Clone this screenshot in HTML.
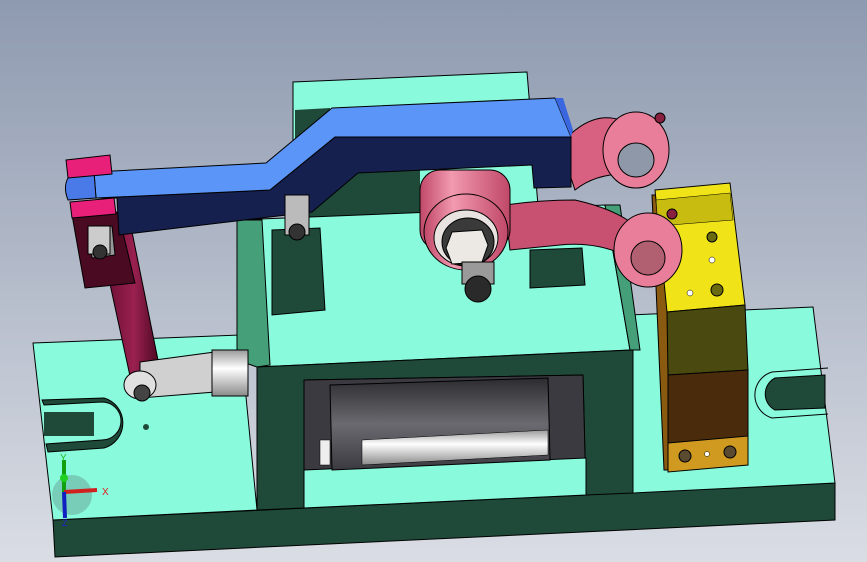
<!DOCTYPE html>
<html><head><meta charset="utf-8"><style>
html,body{margin:0;padding:0;width:867px;height:562px;overflow:hidden;font-family:"Liberation Sans",sans-serif}
</style></head><body>
<svg width="867" height="562" viewBox="0 0 867 562" xmlns="http://www.w3.org/2000/svg">
<defs>
<linearGradient id="bg" x1="0" y1="0" x2="0" y2="1"><stop offset="0" stop-color="#8e9ab0"/><stop offset="1" stop-color="#dadde4"/></linearGradient>
<linearGradient id="rod" x1="0" y1="0" x2="0" y2="1"><stop offset="0" stop-color="#9a9a9a"/><stop offset=".4" stop-color="#ffffff"/><stop offset="1" stop-color="#8a8a8a"/></linearGradient>
<linearGradient id="cyl" x1="0" y1="0" x2="0" y2="1"><stop offset="0" stop-color="#2c2c30"/><stop offset=".5" stop-color="#6a6a70"/><stop offset="1" stop-color="#3a3a40"/></linearGradient>
<linearGradient id="pink" x1="0" y1="0" x2="1" y2="0"><stop offset="0" stop-color="#c04868"/><stop offset=".35" stop-color="#f29ab0"/><stop offset="1" stop-color="#c04868"/></linearGradient>
<linearGradient id="red" x1="0" y1="0" x2="1" y2="0"><stop offset="0" stop-color="#5a0a2a"/><stop offset=".6" stop-color="#9a2050"/><stop offset="1" stop-color="#4a0820"/></linearGradient>
</defs>
<rect width="867" height="562" fill="url(#bg)"/>
<polygon points="53,520 835,483 835,520 55,557" fill="#1f4a3a" stroke="#000" stroke-width="1"/>
<polygon points="33,343 240,335 257,510 53,520" fill="#8afadc" stroke="#000" stroke-width="1"/>
<polygon points="630,315 813,307 835,483 633,493" fill="#8afadc" stroke="#000" stroke-width="1"/>
<path d="M44,405 L102,402 A18,18 0 0 1 102,440 L46,444 L48,452 L104,448 A26,26 0 0 0 104,398 L42,400Z" fill="#1f4a3a" stroke="#000" stroke-width="1"/>
<rect x="44" y="412" width="50" height="24" fill="#1f4a3a"/>
<path d="M825,375 L775,378 A18,18 0 0 0 775,410 L825,408Z" fill="#1f4a3a" stroke="#000" stroke-width="1"/>
<path d="M828,368 L772,372 A24,24 0 0 0 772,418 L828,414" fill="none" stroke="#000" stroke-width="1"/>
<circle cx="146" cy="427" r="3" fill="#1f4a3a"/>
<polygon points="293,82 527,72 540,230 293,235" fill="#8afadc" stroke="#000" stroke-width="1"/>
<polygon points="295,110 330,108 330,230 295,232" fill="#1f4a3a"/>
<polygon points="330,170 420,168 420,215 300,222" fill="#1f4a3a"/>
<polygon points="237,220 605,205 630,350 257,367" fill="#8afadc" stroke="#000" stroke-width="1"/>
<polygon points="237,220 262,220 270,365 257,367 237,360" fill="#45a07a" stroke="#000" stroke-width="1"/>
<polygon points="605,205 620,205 640,350 630,350" fill="#45a07a" stroke="#000" stroke-width="1"/>
<polygon points="272,230 320,228 325,310 272,315" fill="#1f4a3a" stroke="#000" stroke-width="1"/>
<polygon points="530,250 582,248 585,285 530,288" fill="#1f4a3a" stroke="#000" stroke-width="1"/>
<polygon points="257,367 633,350 633,493 586,495 583,375 304,380 304,508 257,510" fill="#1f4a3a" stroke="#000" stroke-width="1"/>
<polygon points="304,380 583,375 586,495 304,508" fill="#3a3a40" stroke="#000" stroke-width="1"/>
<polygon points="304,470 586,458 586,495 304,508" fill="#8afadc" stroke="#000" stroke-width="1"/>
<polygon points="330,385 548,378 550,460 332,470" fill="url(#cyl)" stroke="#000" stroke-width="1"/>
<polygon points="362,440 548,430 548,455 362,465" fill="url(#rod)" stroke="#000" stroke-width=".5"/>
<rect x="320" y="440" width="10" height="25" fill="#eee" stroke="#000" stroke-width=".5"/>
<polygon points="652,195 668,195 680,470 664,470" fill="#8a5a10" stroke="#000" stroke-width="1"/>
<polygon points="655,190 730,183 745,305 667,312" fill="#f0e418" stroke="#000" stroke-width="1"/>
<polygon points="656,200 730,193 733,220 658,226" fill="#c8bc10" stroke="#000" stroke-width=".5"/>
<polygon points="667,312 745,305 748,370 668,375" fill="#4a4a10" stroke="#000" stroke-width="1"/>
<polygon points="668,375 748,370 748,440 668,445" fill="#4a2c0c" stroke="#000" stroke-width="1"/>
<polygon points="668,443 748,436 748,465 668,472" fill="#d09a20" stroke="#000" stroke-width="1"/>
<circle cx="685" cy="456" r="6" fill="#5a4a30" stroke="#000"/><circle cx="730" cy="452" r="6" fill="#5a4a30" stroke="#000"/><circle cx="707" cy="454" r="2.5" fill="#fff" stroke="#000" stroke-width=".5"/>
<circle cx="712" cy="237" r="5" fill="#6a6a10" stroke="#000"/><circle cx="717" cy="290" r="6" fill="#6a6a10" stroke="#000"/><circle cx="690" cy="293" r="3" fill="#fff" stroke="#000" stroke-width=".5"/><circle cx="712" cy="260" r="3" fill="#fff" stroke="#000" stroke-width=".5"/>
<path d="M560,145 Q590,110 620,120 L640,175 Q600,170 575,190Z" fill="#d86080" stroke="#000" stroke-width="1"/>
<path d="M505,205 Q540,200 575,200 Q620,210 640,230 L650,270 Q610,240 560,245 L510,250Z" fill="#c85070" stroke="#000" stroke-width="1"/>
<ellipse cx="636" cy="150" rx="33" ry="38" fill="#e87e9a" stroke="#000"/>
<ellipse cx="636" cy="160" rx="18" ry="17" fill="#8e98a8" stroke="#000"/>
<circle cx="660" cy="118" r="5" fill="#8a2040" stroke="#000"/>
<ellipse cx="648" cy="250" rx="34" ry="37" fill="#e87e9a" stroke="#000"/>
<ellipse cx="648" cy="258" rx="17" ry="17" fill="#b06070" stroke="#000"/>
<circle cx="672" cy="214" r="5" fill="#8a2040" stroke="#000"/>
<rect x="420" y="170" width="90" height="80" rx="20" fill="url(#pink)" stroke="#000"/>
<ellipse cx="466" cy="232" rx="42" ry="38" fill="url(#pink)" stroke="#000"/>
<ellipse cx="466" cy="238" rx="32" ry="28" fill="#e8e2e0" stroke="#000"/>
<ellipse cx="468" cy="242" rx="26" ry="24" fill="#3a3a3a" stroke="#000"/>
<polygon points="452,232 482,230 488,245 482,262 452,264 446,248" fill="#ece8e4" stroke="#000"/>
<rect x="462" y="262" width="32" height="22" fill="#9a9a9a" stroke="#000"/>
<circle cx="478" cy="289" r="13" fill="#2a2a2a" stroke="#000"/>
<polygon points="95,215 128,212 160,370 130,376" fill="url(#red)" stroke="#000"/>
<polygon points="140,362 215,352 215,392 140,398" fill="#d0d0d0" stroke="#000"/>
<rect x="212" y="350" width="36" height="46" fill="url(#rod)" stroke="#000"/>
<ellipse cx="140" cy="385" rx="16" ry="14" fill="#e0e0e0" stroke="#000"/>
<circle cx="142" cy="393" r="8" fill="#444" stroke="#000"/>
<polygon points="72,215 118,212 135,283 85,288" fill="#4a0a22" stroke="#000"/>
<polygon points="88,228 112,226 115,255 92,258" fill="#999" stroke="#000"/>
<circle cx="102" cy="240" r="8" fill="#eee" stroke="#000"/>
<polygon points="96,198 270,190 335,137 571,137 571,187 534,188 532,165 358,173 312,212 119,235 117,198" fill="#16204f" stroke="#000"/>
<polygon points="94,172 266,163 332,108 555,98 571,137 335,137 270,190 96,198" fill="#5b95f8" stroke="#000"/>
<polygon points="555,98 563,98 573,130 571,137" fill="#3a66e0"/>
<path d="M94,172 L70,175 Q62,185 68,200 L96,198Z" fill="#4a7ae8" stroke="#000"/>
<polygon points="66,160 110,155 112,174 68,178" fill="#e8207a" stroke="#000"/>
<polygon points="70,202 114,198 116,214 72,218" fill="#e8207a" stroke="#000"/>
<rect x="285" y="195" width="24" height="40" fill="#bbb" stroke="#000"/>
<circle cx="297" cy="232" r="8" fill="#333" stroke="#000"/>
<rect x="88" y="226" width="22" height="28" fill="#ccc" stroke="#000"/>
<circle cx="100" cy="252" r="7" fill="#333" stroke="#000"/>
<circle cx="72" cy="495" r="20" fill="#5a8a80" opacity=".4"/>
<line x1="64" y1="492" x2="64" y2="460" stroke="#10a010" stroke-width="4"/>
<circle cx="64" cy="478" r="4" fill="#20d020"/>
<line x1="64" y1="492" x2="97" y2="490" stroke="#d02020" stroke-width="4"/>
<line x1="64" y1="492" x2="65" y2="518" stroke="#1020c0" stroke-width="4"/>
<text x="60" y="461" font-size="10" fill="#20c020">Y</text>
<text x="102" y="495" font-size="10" fill="#e02020">X</text>
<text x="62" y="526" font-size="9" fill="#2020d0">Z</text>
</svg>
</body></html>
